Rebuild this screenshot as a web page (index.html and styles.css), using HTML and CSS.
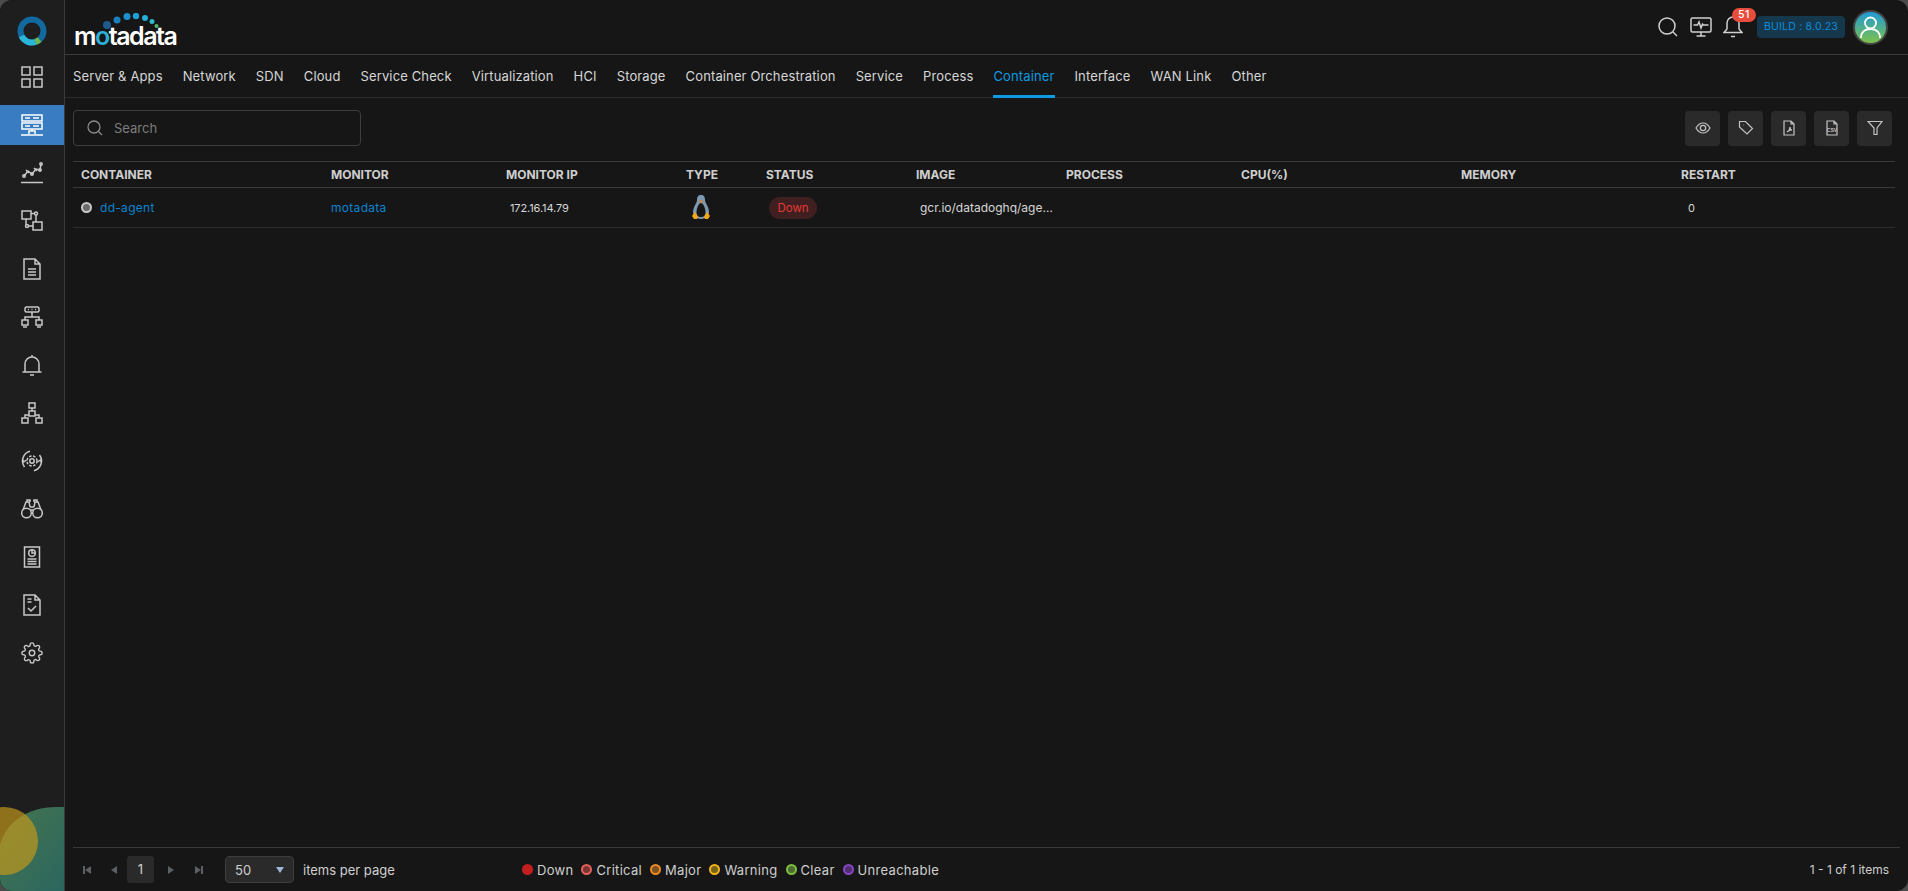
FILE: index.html
```html
<!DOCTYPE html>
<html lang="en">
<head>
    <meta charset="UTF-8">
    <title>Motadata - Container</title>
    <link rel="stylesheet" href="styles.css">
</head>
<body>
<div class="app">
    <aside class="sidebar">
        <div class="side-logo">
            <svg width="30" height="30" viewBox="0 0 30 30" fill="none">
                <circle cx="15" cy="15" r="11.5" stroke="#12699f" stroke-width="6"/>
                <path d="M4.500 20a11.500 11.500 0 0 0 14 6" stroke="#2bb5d8" stroke-width="6"/>
                <path d="M18.500 26a11.500 11.500 0 0 0 4-2.500" stroke="#6cb84e" stroke-width="6"/>
            </svg>
        </div>
        <nav class="side-nav">
            <a class="side-item"><svg class="ico" viewBox="0 0 22 22"><rect x="1" y="1" width="8" height="8"/><rect x="13" y="1" width="8" height="8"/><rect x="1" y="13" width="8" height="8"/><rect x="13" y="13" width="8" height="8"/></svg></a>
            <a class="side-item active"><svg class="ico" viewBox="0 0 22 22"><rect x="1" y="1" width="20" height="6"/><rect x="1" y="9" width="20" height="6"/><path d="M4 4h5M12 4h6M4 12h5M12 12h6M11 15v2M8 20v-3h6v3M0 21h22"/></svg></a>
            <a class="side-item"><svg class="ico" viewBox="0 0 22 22"><path d="M3 14l4-5 4 3 4-5 4 1 1-6M0 20.500h22"/><circle cx="3" cy="14" r="1.200"/><circle cx="11" cy="12" r="1.200"/><circle cx="19" cy="8" r="1.200"/><circle cx="20" cy="2" r="1.200"/><path d="M5 8l3 3M13 6l3 3"/></svg></a>
            <a class="side-item"><svg class="ico" viewBox="0 0 22 22"><rect x="1" y="1" width="9" height="8"/><rect x="12" y="12" width="9" height="8"/><circle cx="15" cy="3.500" r="1.500"/><circle cx="6" cy="16" r="1.500"/><path d="M10 3.500h3.500M15 5v7M5 9v5.500M7.500 16H12"/></svg></a>
            <a class="side-item"><svg class="ico" viewBox="0 0 22 22"><path d="M3 1h11l5 5v15H3zM14 1v5h5M7 11h8M7 14h8M7 17h8"/></svg></a>
            <a class="side-item"><svg class="ico" viewBox="0 0 22 22"><rect x="4" y="1" width="14" height="5" rx="1.500"/><path d="M7 3.500h1M10.500 3.500h1M14 3.500h1M11 6v5M4 14v-3h14v3"/><rect x="1" y="14" width="6" height="5"/><rect x="15" y="14" width="6" height="5"/><path d="M2 21h4M16 21h4"/></svg></a>
            <a class="side-item"><svg class="ico" viewBox="0 0 22 22"><path d="M11 1v2M4 18V10a7 7 0 0 1 14 0v8M1.500 18h19M9 21h4"/></svg></a>
            <a class="side-item"><svg class="ico" viewBox="0 0 22 22"><rect x="8" y="1" width="6" height="5"/><rect x="8" y="9" width="6" height="5"/><rect x="1" y="16" width="6" height="5"/><rect x="15" y="16" width="6" height="5"/><path d="M11 6v3M4 16v-3h4M18 16v-3h-4"/></svg></a>
            <a class="side-item"><svg class="ico" viewBox="0 0 22 22"><circle cx="11" cy="11" r="2.200"/><circle cx="11" cy="11" r="5" stroke-dasharray="2.500 1.500"/><path d="M3.500 17A10 10 0 0 1 9 1.300M18.500 5a10 10 0 0 1-5.500 15.700M1.500 8.500l1 3.500 3-2M20.500 13.500l-1-3.500-3 2"/></svg></a>
            <a class="side-item"><svg class="ico" viewBox="0 0 22 22"><circle cx="5.500" cy="15" r="4.800"/><circle cx="16.500" cy="15" r="4.800"/><path d="M9.500 12h3M9 9h4M2 12l3-8h3l1 5M20 12l-3-8h-3l-1 5M6 4V2h3v2M13 4V2h3v2"/></svg></a>
            <a class="side-item"><svg class="ico" viewBox="0 0 22 22"><rect x="3.500" y="1" width="15" height="20"/><circle cx="11" cy="7" r="3.300"/><path d="M11 4v3h3M6.500 13h9M6.500 15.500h9M6.500 18h9"/></svg></a>
            <a class="side-item"><svg class="ico" viewBox="0 0 22 22"><path d="M3 1h11l5 5v15H3zM14 1v5h5M6.500 5h4M6.500 8h4M7 14l3 3 5-5"/></svg></a>
            <a class="side-item"><svg class="ico" viewBox="0 0 24 24"><circle cx="12" cy="12" r="3"/><path d="M19.400 15a1.650 1.650 0 0 0 .33 1.820l.06.06a2 2 0 0 1 0 2.830 2 2 0 0 1-2.830 0l-.06-.06a1.650 1.650 0 0 0-1.820-.33 1.650 1.650 0 0 0-1 1.510V21a2 2 0 0 1-2 2 2 2 0 0 1-2-2v-.09A1.650 1.650 0 0 0 9 19.400a1.650 1.650 0 0 0-1.820.33l-.06.06a2 2 0 0 1-2.830 0 2 2 0 0 1 0-2.830l.06-.06a1.650 1.650 0 0 0 .33-1.820 1.650 1.650 0 0 0-1.510-1H3a2 2 0 0 1-2-2 2 2 0 0 1 2-2h.09A1.650 1.650 0 0 0 4.600 9a1.650 1.650 0 0 0-.33-1.820l-.06-.06a2 2 0 0 1 0-2.830 2 2 0 0 1 2.830 0l.06.06a1.650 1.650 0 0 0 1.820.33H9a1.650 1.650 0 0 0 1-1.510V3a2 2 0 0 1 2-2 2 2 0 0 1 2 2v.09a1.650 1.650 0 0 0 1 1.510 1.650 1.650 0 0 0 1.820-.33l.06-.06a2 2 0 0 1 2.830 0 2 2 0 0 1 0 2.830l-.06.06a1.650 1.650 0 0 0-.33 1.820V9a1.650 1.650 0 0 0 1.510 1H21a2 2 0 0 1 2 2 2 2 0 0 1-2 2h-.09a1.650 1.650 0 0 0-1.510 1z"/></svg></a>
        </nav>
        <svg class="side-art" width="64" height="84" viewBox="0 0 64 84">
            <defs>
                <linearGradient id="artGreen" x1="0" y1="0" x2="1" y2="1">
                    <stop offset="0" stop-color="#45754f"/>
                    <stop offset="1" stop-color="#2b665f"/>
                </linearGradient>
            </defs>
            <path d="M0 84V38C6 15 28 0 56 0H64V84z" fill="url(#artGreen)"/>
            <circle cx="4" cy="34" r="34" fill="#c69a1a" fill-opacity=".68"/>
        </svg>
    </aside>

    <div class="main">
        <header class="topbar">
            <div class="logo">
                <svg class="logo-dots" width="56" height="17" viewBox="0 0 56 17">
                    <circle cx="4" cy="12" r="4" fill="#1e5b8c"/>
                    <circle cx="14" cy="7" r="3.500" fill="#1b7fc0"/>
                    <circle cx="24" cy="3.500" r="3.500" fill="#1c8fd0"/>
                    <circle cx="33" cy="3" r="3.200" fill="#1f9fd8"/>
                    <circle cx="42" cy="5" r="3" fill="#25aed8"/>
                    <circle cx="49" cy="8.500" r="2.500" fill="#2bbcc8"/>
                    <circle cx="53.500" cy="13" r="2" fill="#56b868"/>
                </svg>
                <span class="logo-text">m<span class="logo-o">o</span>tadata</span>
            </div>
            <div class="top-actions">
                <svg class="top-ico" width="20" height="20" viewBox="0 0 20 20"><circle cx="9" cy="9" r="8"/><path d="M15 15l4 4"/></svg>
                <svg class="top-ico top-mon" width="22" height="20" viewBox="0 0 22 20"><rect x="1" y="1" width="20" height="14" rx="1.500"/><path d="M3.500 8h4l1.500-3 2 6 1.500-4 1 1h5M11 15v4M6.500 19h9"/></svg>
                <div class="bell">
                    <svg class="top-ico" width="20" height="22" viewBox="0 0 20 22"><path d="M10 1a6 6 0 0 0-6 6v6l-3 3.500h18L16 13V7a6 6 0 0 0-6-6zM8 20.500h4"/></svg>
                    <span class="bell-badge">51</span>
                </div>
                <span class="build">BUILD : 8.0.23</span>
                <div class="avatar">
                    <svg width="29" height="29" viewBox="0 0 29 29" fill="none" stroke="#fff" stroke-width="1.800"><circle cx="14.500" cy="10" r="5.500"/><path d="M5 25c0-6 4-9 9.500-9s9.500 3 9.500 9"/></svg>
                </div>
            </div>
        </header>

        <nav class="tabs">
            <a class="tab">Server &amp; Apps</a>
            <a class="tab">Network</a>
            <a class="tab">SDN</a>
            <a class="tab">Cloud</a>
            <a class="tab">Service Check</a>
            <a class="tab">Virtualization</a>
            <a class="tab">HCI</a>
            <a class="tab">Storage</a>
            <a class="tab">Container Orchestration</a>
            <a class="tab">Service</a>
            <a class="tab">Process</a>
            <a class="tab active">Container</a>
            <a class="tab">Interface</a>
            <a class="tab">WAN Link</a>
            <a class="tab">Other</a>
        </nav>

        <div class="toolbar">
            <div class="search">
                <svg class="search-ico" width="16" height="16" viewBox="0 0 16 16"><circle cx="7" cy="7" r="6"/><path d="M11.500 11.500l3.500 3.500"/></svg>
                <span>Search</span>
            </div>
            <div class="tool-buttons">
                <button class="tool-btn"><svg class="btn-ico" width="16" height="16" viewBox="0 0 16 16"><path d="M1 8c2-3.500 4.300-5 7-5s5 1.500 7 5c-2 3.500-4.300 5-7 5s-5-1.500-7-5z"/><circle cx="8" cy="8" r="2.700"/></svg></button>
                <button class="tool-btn"><svg class="btn-ico" width="16" height="16" viewBox="0 0 16 16"><path d="M1.500 1.500h6l7 7-5.500 5.500-7.500-7zM5 5h.5"/></svg></button>
                <button class="tool-btn"><svg class="btn-ico" width="16" height="16" viewBox="0 0 16 16"><path d="M3 1h7l3 3v11H3zM10 1v3h3M6 12c2-1 3-3 3-5 0 2 1 3 2 3-2 0-4 1-5 2z"/></svg></button>
                <button class="tool-btn"><svg class="btn-ico" width="16" height="16" viewBox="0 0 16 16"><path d="M3 1h7l3 3v11H3zM10 1v3h3"/><text class="csv" x="8" y="11.500">CSV</text></svg></button>
                <button class="tool-btn"><svg class="btn-ico" width="16" height="16" viewBox="0 0 16 16"><path d="M1 1.500h14L10 8v6.500H7V8z"/></svg></button>
            </div>
        </div>

        <div class="table-wrap">
            <table class="grid">
                <colgroup>
                    <col class="c250"><col class="c175"><col class="c180"><col class="c80"><col class="c150"><col class="c150"><col class="c175"><col class="c220"><col class="c220"><col>
                </colgroup>
                <thead>
                    <tr>
                        <th>CONTAINER</th>
                        <th>MONITOR</th>
                        <th>MONITOR IP</th>
                        <th>TYPE</th>
                        <th>STATUS</th>
                        <th>IMAGE</th>
                        <th>PROCESS</th>
                        <th>CPU(%)</th>
                        <th>MEMORY</th>
                        <th>RESTART</th>
                    </tr>
                </thead>
                <tbody>
                    <tr>
                        <td><span class="state-dot"></span><a class="link">dd-agent</a></td>
                        <td><a class="link">motadata</a></td>
                        <td class="shift ip">172.16.14.79</td>
                        <td>
                            <svg class="tux" width="18" height="25" viewBox="0 0 18 25">
                                <path d="M9 0C6 0 5 2 5 5c0 3-4 7-4 12 0 3 3 7 8 7s8-4 8-7c0-5-4-9-4-12 0-3-1-5-4-5z" fill="#7d99b0"/>
                                <path d="M9 8c-2 0-4.500 5-4.500 9s2 5 4.500 5 4.500-1 4.500-5-2.500-9-4.500-9z" fill="#161616"/>
                                <path d="M7 5.500h4L9 8.500z" fill="#e8811a"/>
                                <path d="M0 21l3-4 3 5-1 2H2zM18 21l-3-4-3 5 1 2h3z" fill="#f5a916"/>
                            </svg>
                        </td>
                        <td><span class="status-down">Down</span></td>
                        <td class="shift">gcr.io/datadoghq/age…</td>
                        <td></td>
                        <td></td>
                        <td></td>
                        <td class="shift2 ip">0</td>
                    </tr>
                </tbody>
            </table>
        </div>

        <footer class="pager">
            <div class="pager-nav">
                <svg class="pg" width="10" height="10" viewBox="0 0 10 10"><path d="M1 1h2v8H1zM9 1v8L3 5z"/></svg>
                <svg class="pg pg-prev" width="7" height="10" viewBox="0 0 7 10"><path d="M7 1v8L1 5z"/></svg>
                <span class="page-num">1</span>
                <svg class="pg pg-next" width="7" height="10" viewBox="0 0 7 10"><path d="M0 1v8l6-4z"/></svg>
                <svg class="pg pg-last" width="10" height="10" viewBox="0 0 10 10"><path d="M9 1H7v8h2zM1 1v8l6-4z"/></svg>
            </div>
            <div class="page-size"><span>50</span><span class="caret"></span></div>
            <span class="per-page">items per page</span>
            <ul class="legend">
                <li><span class="dot dot-down"></span>Down</li>
                <li><span class="dot dot-critical"></span>Critical</li>
                <li><span class="dot dot-major"></span>Major</li>
                <li><span class="dot dot-warning"></span>Warning</li>
                <li><span class="dot dot-clear"></span>Clear</li>
                <li><span class="dot dot-unreach"></span>Unreachable</li>
            </ul>
            <span class="total">1 - 1 of 1 items</span>
        </footer>
    </div>
</div>
</body>
</html>
```

FILE: styles.css
```css
* {
    box-sizing: border-box;
}
html, body {
    margin: 0;
    padding: 0;
    height: 100%;
    background: #4a4a4a;
    font-family: "Inter", "Noto Sans", sans-serif;
    overflow: hidden;
}
.app {
    display: flex;
    height: 891px;
    background: #161616;
    border-radius: 12px;
    overflow: hidden;
}

/* sidebar */
.sidebar {
    position: relative;
    width: 65px;
    flex: none;
    background: #1e1e1e;
    border-right: 1px solid #3a3a3a;
}
.side-logo {
    height: 57px;
    display: flex;
    align-items: center;
    justify-content: center;
    padding-top: 5px;
}
.side-nav {
    display: flex;
    flex-direction: column;
    gap: 8px;
}
.side-item {
    height: 40px;
    display: flex;
    align-items: center;
    justify-content: center;
}
.side-item.active {
    background: #3a7cc2;
}
.ico {
    width: 22px;
    height: 22px;
    fill: none;
    stroke: #c8c8c8;
    stroke-width: 1.5;
}
.active .ico {
    stroke: #fff;
}
.side-art {
    position: absolute;
    left: 0;
    bottom: 0;
}

/* top bar */
.main {
    flex: 1;
    min-width: 0;
    display: flex;
    flex-direction: column;
}
.topbar {
    height: 55px;
    flex: none;
    display: flex;
    align-items: center;
    justify-content: space-between;
    padding: 0 20px 0 9px;
    border-bottom: 1px solid #3a3a3a;
}
.logo {
    position: relative;
    width: 104px;
    height: 38px;
    padding-top: 13px;
}
.logo-dots {
    position: absolute;
    left: 29px;
    top: 5px;
}
.logo-text {
    font-size: 25px;
    font-weight: 600;
    line-height: 30px;
    color: #fff;
    letter-spacing: -1.5px;
}
.logo-o {
    color: #2bb0d6;
}
.top-actions {
    display: flex;
    align-items: center;
}
.top-ico {
    display: block;
    fill: none;
    stroke: #d0d0d0;
    stroke-width: 1.5;
}
.top-mon {
    margin: 0 11px 0 12px;
}
.bell {
    position: relative;
    width: 34px;
}
.bell-badge {
    position: absolute;
    left: 9px;
    top: -8px;
    width: 24px;
    height: 14px;
    border-radius: 7px;
    background: #e74c3c;
    color: #fff;
    font-size: 10.500px;
    font-weight: 500;
    line-height: 14px;
    text-align: center;
    letter-spacing: .6px;
}
.build {
    width: 88px;
    height: 22px;
    border-radius: 4px;
    background: #16384d;
    color: #0b8bdc;
    font-size: 10.500px;
    line-height: 22px;
    text-align: center;
    letter-spacing: .2px;
}
.avatar {
    width: 35px;
    height: 35px;
    margin-left: 8px;
    border-radius: 50%;
    border: 2px solid #444;
    background: linear-gradient(#1f9ad6, #7dc24a);
    display: flex;
    align-items: center;
    justify-content: center;
}

/* tabs */
.tabs {
    height: 43px;
    flex: none;
    display: flex;
    gap: 20px;
    padding-left: 8px;
    border-bottom: 1px solid #2c2c2c;
}
.tab {
    height: 43px;
    font-size: 13px;
    line-height: 42px;
    color: #d6d6d6;
    letter-spacing: .13px;
    white-space: nowrap;
}
.tab.active {
    color: #0d9ae0;
    border-bottom: 3px solid #0d9ae0;
}

/* toolbar */
.toolbar {
    display: flex;
    justify-content: space-between;
    align-items: center;
    padding: 12px 16px 0 8px;
    flex: none;
}
.search {
    width: 288px;
    height: 36px;
    border: 1px solid #3d3d3d;
    border-radius: 4px;
    display: flex;
    align-items: center;
    padding-left: 13px;
    color: #7d7d7d;
    font-size: 13px;
}
.search-ico {
    fill: none;
    stroke: #8a8a8a;
    stroke-width: 1.3;
    margin-right: 11px;
}
.tool-buttons {
    display: flex;
    gap: 8px;
}
.tool-btn {
    width: 35px;
    height: 35px;
    padding: 0;
    border: none;
    border-radius: 4px;
    background: #2a2a2a;
    display: flex;
    align-items: center;
    justify-content: center;
}
.btn-ico {
    fill: none;
    stroke: #c4c4c4;
    stroke-width: 1.2;
}
.csv {
    font-size: 5px;
    font-weight: 700;
    text-anchor: middle;
    fill: #c4c4c4;
    stroke: none;
}

/* table */
.table-wrap {
    flex: 1;
    padding: 15px 13px 0 8px;
}
.grid {
    width: 100%;
    table-layout: fixed;
    border-collapse: collapse;
    font-size: 12px;
}
.c250 { width: 250px; }
.c175 { width: 175px; }
.c180 { width: 180px; }
.c80 { width: 80px; }
.c150 { width: 150px; }
.c220 { width: 220px; }
.grid th {
    height: 26px;
    padding: 0 8px;
    text-align: left;
    font-size: 12px;
    font-weight: 700;
    color: #cfcfcf;
    border-top: 1px solid #3a3a3a;
    border-bottom: 1px solid #3a3a3a;
    white-space: nowrap;
}
.grid td {
    height: 40px;
    padding: 0 8px;
    color: #d6d6d6;
    border-bottom: 1px solid #2c2c2c;
    white-space: nowrap;
}
.grid td.shift {
    padding-left: 12px;
}
.grid td.shift2 {
    padding-left: 15px;
}
.grid td.ip {
    font-size: 11px;
    letter-spacing: -.1px;
}
.link {
    color: #0a84d0;
    letter-spacing: .3px;
}
.state-dot {
    display: inline-block;
    width: 11px;
    height: 11px;
    margin-right: 8px;
    border: 2px solid #c8c8c8;
    border-radius: 50%;
    background: #6a6a6a;
    vertical-align: -1px;
}
.tux {
    display: block;
    margin-left: 6px;
}
.status-down {
    display: inline-block;
    width: 48px;
    height: 22px;
    margin-left: 3px;
    border-radius: 12px;
    background: #3f1f1f;
    color: #e53935;
    font-size: 11.500px;
    line-height: 22px;
    text-align: center;
}

/* footer */
.pager {
    height: 44px;
    margin: 0 8px;
    flex: none;
    display: flex;
    align-items: center;
    border-top: 1px solid #3a3a3a;
    padding-left: 9px;
    font-size: 13px;
    color: #cfcfcf;
}
.pager-nav {
    display: flex;
    align-items: center;
}
.pg {
    fill: #5c5f63;
}
.pg-prev {
    margin-left: 18px;
    margin-right: 10px;
}
.pg-next {
    margin-left: 14px;
}
.pg-last {
    margin-left: 19px;
}
.page-num {
    width: 27px;
    height: 27px;
    border-radius: 3px;
    background: #2a2a2a;
    line-height: 27px;
    text-align: center;
}
.page-size {
    width: 69px;
    height: 27px;
    margin-left: 21px;
    padding: 0 9px;
    border: 1px solid #3d3d3d;
    border-radius: 4px;
    background: #2a2a2a;
    display: flex;
    align-items: center;
    justify-content: space-between;
}
.caret {
    width: 0;
    height: 0;
    border-left: 4px solid transparent;
    border-right: 4px solid transparent;
    border-top: 6px solid #9db8d6;
}
.per-page {
    margin-left: 9px;
    width: 91px;
    white-space: nowrap;
}
.legend {
    display: flex;
    gap: 8px;
    list-style: none;
    margin: 0 0 0 128px;
    padding: 0;
    letter-spacing: .3px;
}
.legend li {
    display: flex;
    align-items: center;
    gap: 4px;
}
.dot {
    width: 11px;
    height: 11px;
    border-radius: 50%;
    border: 2px solid;
}
.dot-down { background: #c41f1f; border-color: #c41f1f; }
.dot-critical { background: #7a3535; border-color: #e8605a; }
.dot-major { background: #7a5220; border-color: #f08a24; }
.dot-warning { background: #75621c; border-color: #f5b316; }
.dot-clear { background: #4d6d30; border-color: #7fbf3f; }
.dot-unreach { background: #4f2f70; border-color: #8b44c4; }
.total {
    margin-left: auto;
    margin-right: 11px;
    font-size: 12px;
}
```
